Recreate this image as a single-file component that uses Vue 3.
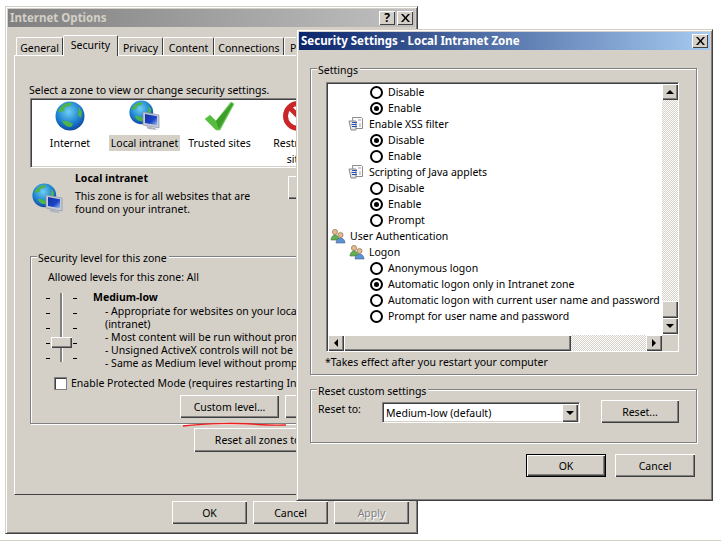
<script setup>
const tabs = [
  { t: 'General', w: 47 }, { t: 'Security', w: 55, active: true }, { t: 'Privacy', w: 45 },
  { t: 'Content', w: 51 }, { t: 'Connections', w: 70 }, { t: 'Programs', w: 60 }
]
const sliderRows = [0, 1, 2, 3, 4]
const rows = [
  { k: 'r', t: 'Disable' }, { k: 'r', t: 'Enable', on: true },
  { k: 's', t: 'Enable XSS filter' },
  { k: 'r', t: 'Disable', on: true }, { k: 'r', t: 'Enable' },
  { k: 's', t: 'Scripting of Java applets' },
  { k: 'r', t: 'Disable' }, { k: 'r', t: 'Enable', on: true }, { k: 'r', t: 'Prompt' },
  { k: 'u', t: 'User Authentication' },
  { k: 'l', t: 'Logon' },
  { k: 'r', t: 'Anonymous logon' },
  { k: 'r', t: 'Automatic logon only in Intranet zone', on: true },
  { k: 'r', t: 'Automatic logon with current user name and password' },
  { k: 'r', t: 'Prompt for user name and password' }
]
</script>

<template>
  <div class="desk">
    <!-- back dialog -->
    <section class="win back">
      <header class="title gray">
        <span>Internet Options</span>
        <span class="ctl-group">
          <span class="ctl q">?</span>
          <span class="ctl x">
            <svg viewBox="0 0 9 8" width="9" height="8"><path d="M0 0h2l2.500 3L7 0h2L5.500 4 9 8H7L4.500 5 2 8H0l3.500-4z" fill="#000"/></svg>
          </span>
        </span>
      </header>
      <nav class="tabs">
        <span v-for="tab in tabs" :key="tab.t" class="tab" :class="{ active: tab.active }" :style="{ width: tab.w + 'px' }">{{ tab.t }}</span>
      </nav>
      <div class="pane">
        <p class="select">Select a zone to view or change security settings.</p>
        <div class="zones sunken">
          <div class="zone z1">
            <svg class="ic" viewBox="0 0 32 32" width="32" height="32"><use href="#globe"/></svg>
            <span>Internet</span>
          </div>
          <div class="zone z2">
            <svg class="ic" viewBox="0 0 32 32" width="32" height="32">
              <use href="#intranet"/>
            </svg>
            <span class="sel">Local intranet</span>
          </div>
          <div class="zone z3">
            <svg class="ic" viewBox="0 0 32 32" width="32" height="32">
              <path d="M1 19l5-4 6 6L27 2l3 2-14 26h-4z" fill="#57bd3f" stroke="#7dcf63" stroke-width=".8"/>
              <path d="M12 21L28 3l1 1-14 25z" fill="#3c9c2c"/>
            </svg>
            <span>Trusted sites</span>
          </div>
          <div class="zone z4">
            <svg class="ic" viewBox="0 0 32 32" width="32" height="32">
              <circle cx="16" cy="16" r="12.500" fill="#fff" stroke="#c9262a" stroke-width="5"/>
              <path d="M7 7l18 18" stroke="#c9262a" stroke-width="5"/>
            </svg>
            <span class="rs">Restricted<br>sites</span>
          </div>
        </div>
        <div class="info">
          <svg class="info-ic" viewBox="0 0 32 32" width="32" height="32"><use href="#intranet"/></svg>
          <div class="info-txt">
            <b>Local intranet</b>
            <p>This zone is for all websites that are<br>found on your intranet.</p>
          </div>
          <span class="btn sites">Sites</span>
        </div>
        <fieldset class="grp level">
          <legend>Security level for this zone</legend>
          <p class="allowed">Allowed levels for this zone: All</p>
          <div class="level-body">
            <div class="slider">
              <i class="track"></i>
              <i class="thumb"></i>
              <div v-for="n in sliderRows" :key="n" class="tick-row"><i></i><i></i></div>
            </div>
            <div class="desc">
              <b>Medium-low</b>
              <p>- Appropriate for websites on your local network<br>(intranet)<br>- Most content will be run without prompting you<br>- Unsigned ActiveX controls will not be downloaded<br>- Same as Medium level without prompts</p>
            </div>
          </div>
          <label class="protect"><i class="chk"></i>Enable Protected Mode (requires restarting Internet Explorer)</label>
          <div class="lvl-btns">
            <span class="btn custom">Custom level...</span>
            <span class="btn default">Default level</span>
          </div>
        </fieldset>
        <svg class="scribble" viewBox="0 0 105 6" width="105" height="6"><path d="M1 4C25 1 60 1 76 2.500 84 3 96 3.300 104 3" fill="none" stroke="#f01c1c" stroke-width="1.300"/></svg>
        <div class="reset-row"><span class="btn resetall">Reset all zones to default level</span></div>
      </div>
      <footer class="foot">
        <span class="btn f">OK</span>
        <span class="btn f">Cancel</span>
        <span class="btn f off">Apply</span>
      </footer>
    </section>

    <!-- front dialog -->
    <section class="win front">
      <header class="title blue">
        <span>Security Settings - Local Intranet Zone</span>
        <span class="ctl x">
          <svg viewBox="0 0 9 8" width="9" height="8"><path d="M0 0h2l2.500 3L7 0h2L5.500 4 9 8H7L4.500 5 2 8H0l3.500-4z" fill="#000"/></svg>
        </span>
      </header>
      <div class="front-body">
        <fieldset class="grp settings">
          <legend>Settings</legend>
          <div class="list sunken">
            <div class="list-top">
              <ul class="rows">
                <li v-for="(r, i) in rows" :key="i" class="row" :class="'k-' + r.k">
                  <i v-if="r.k === 'r'" class="radio" :class="{ on: r.on }"></i>
                  <svg v-else-if="r.k === 's'" class="rowic" viewBox="0 0 16 16" width="16" height="16">
                    <path d="M4.500 1.500h9l1 1v10h-9z" fill="#fff" stroke="#8b8b8b"/>
                    <path d="M1 5h7v9H3z" fill="#e4e4e4" stroke="#8b8b8b"/>
                    <path d="M4 6.500h5M3.500 8.500h5M4 10.500h5" stroke="#2a52b8" stroke-width="1.200"/>
                    <path d="M10 4h3M11 8h2M11 10h2" stroke="#a0a0a0"/>
                  </svg>
                  <svg v-else class="rowic" viewBox="0 0 16 16" width="16" height="16"><use href="#users"/></svg>
                  <span>{{ r.t }}</span>
                </li>
              </ul>
              <div class="vbar">
                <span class="sb-btn"><i class="arr up"></i></span>
                <span class="track-fill"></span>
                <span class="sb-thumb"></span>
                <span class="sb-btn"><i class="arr dn"></i></span>
              </div>
            </div>
            <div class="hbar">
              <span class="sb-btn"><i class="arr lf"></i></span>
              <span class="h-thumb"></span>
              <span class="track-fill"></span>
              <span class="sb-btn"><i class="arr rt"></i></span>
              <span class="corner"></span>
            </div>
          </div>
          <p class="note">*Takes effect after you restart your computer</p>
        </fieldset>
        <fieldset class="grp resetbox">
          <legend>Reset custom settings</legend>
          <div class="reset-line">
            <span class="reset-lbl">Reset to:</span>
            <div class="combo sunken">
              <span>Medium-low (default)</span>
              <span class="sb-btn"><i class="arr dn"></i></span>
            </div>
            <span class="btn resetbtn">Reset...</span>
          </div>
        </fieldset>
        <div class="front-foot">
          <span class="btn ok-def"><span>OK</span></span>
          <span class="btn cancel">Cancel</span>
        </div>
      </div>
    </section>

    <svg class="defs" width="0" height="0">
      <defs>
        <radialGradient id="sea" cx=".45" cy=".35" r=".75">
          <stop offset="0" stop-color="#6fd0f2"/><stop offset=".55" stop-color="#1d82cf"/><stop offset="1" stop-color="#0a2f92"/>
        </radialGradient>
        <linearGradient id="scr" x1="0" y1="0" x2="1" y2="1">
          <stop offset="0" stop-color="#12309f"/><stop offset=".6" stop-color="#1a45c8"/><stop offset="1" stop-color="#a5c0ef"/>
        </linearGradient>
        <g id="globe">
          <circle cx="16" cy="16" r="14.500" fill="url(#sea)"/>
          <path d="M6 8c3-4 8-6 12-5l-2 3-5 1-1 4-4 1-2-1zM25 7l3 5-1 6-3-3zM8 21c3-1 7 0 11 3l-2 3c-4 0-7-2-9-6z" fill="#4fb347"/>
        </g>
        <g id="intranet">
          <g transform="scale(.82)">
            <circle cx="15" cy="15" r="14.500" fill="url(#sea)"/>
            <path d="M5 8c3-4 8-6 12-5l-2 3-5 1-1 4-4 1-2-1zM24 7l3 5-1 6-3-3zM7 20c3-1 7 0 11 3l-2 3c-4 0-7-2-9-6z" fill="#4fb347"/>
          </g>
          <path d="M14 12l16 3v13l-16-3z" fill="#c5cbd6" stroke="#8b93a3" stroke-width=".7"/>
          <path d="M16 14l12 2.300v9L16 23z" fill="url(#scr)"/>
          <path d="M17 26l9 2 2 2-9-1z" fill="#aeb3bd"/>
        </g>
        <g id="users">
          <circle cx="5" cy="4" r="2.600" fill="#e6b98a" stroke="#77664a" stroke-width=".6"/>
          <path d="M1 12c0-3 2-5 4-5s4 2 4 5z" fill="#5fb14c" stroke="#4a6d3a" stroke-width=".6"/>
          <circle cx="10.500" cy="7" r="2.600" fill="#e6b98a" stroke="#77664a" stroke-width=".6"/>
          <path d="M6 15c0-3 2-5 4.500-5s4.500 2 4.500 5z" fill="#5f93d0" stroke="#3d5f8f" stroke-width=".6"/>
        </g>
      </defs>
    </svg>
  </div>
</template>

<style>
html, body { margin: 0; background: #fff; }
</style>

<style scoped>
.desk {
  position: relative; width: 721px; height: 541px; overflow: hidden; background: #fff;
  font: 10.500px/16px "Noto Sans", Tahoma, sans-serif; color: #000;
  border-bottom: 1px solid #d4d0c8; box-sizing: border-box;
}
.defs { position: absolute; }
p { margin: 0; }
.win {
  position: absolute; box-sizing: border-box; background: #d4d0c8;
  display: flex; flex-direction: column; padding: 2px;
  border: 1px solid; border-color: #d4d0c8 #404040 #404040 #d4d0c8;
  box-shadow: inset 1px 1px 0 #fff, inset -1px -1px 0 #808080;
}
.back { left: 5px; top: 6px; width: 413px; height: 528px; }
.front { left: 296px; top: 29px; width: 417px; height: 472px; }
.title {
  height: 18px; flex: none; display: flex; align-items: center; justify-content: space-between;
  padding: 0 2px; font-weight: 700; font-size: 11.500px; color: #fff; white-space: nowrap;
}
.gray { background: linear-gradient(90deg, #808080, #c0c0c0); color: #d4d0c8; }
.blue { background: linear-gradient(90deg, #0a246a, #a6caf0); }
.ctl-group { display: flex; gap: 2px; }
.ctl {
  width: 16px; height: 14px; box-sizing: border-box; background: #d4d0c8; color: #000;
  display: flex; align-items: center; justify-content: center; font-size: 12px;
  box-shadow: inset 1px 1px 0 #fff, inset -1px -1px 0 #404040;
}
.q { font-weight: 700; }
.tabs { display: flex; height: 25px; padding: 3px 0 0 8px; box-sizing: content-box; align-items: flex-end; }
.tab {
  height: 18px; box-sizing: border-box; display: flex; align-items: center; justify-content: center; padding-top: 2px;
  border: 1px solid; border-color: #fff #404040 transparent #fff; border-bottom: 0; border-radius: 2px 2px 0 0;
  white-space: nowrap; flex: none;
}
.tab.active { height: 21px; margin-bottom: -1px; padding: 0 0 2px; position: relative; z-index: 2; background: #d4d0c8; }
.pane {
  flex: 1; margin: 0 6px; position: relative; padding: 26px 14px 0 14px;
  border: 1px solid; border-color: #fff #404040 #404040 #fff; display: flex; flex-direction: column;
}
.select { white-space: nowrap; height: 16px; }
.sunken {
  box-sizing: border-box; background: #fff;
  border: 1px solid; border-color: #808080 #fff #fff #808080;
  box-shadow: inset 1px 1px 0 #404040, inset -1px -1px 0 #d4d0c8;
}
.zones { height: 70px; width: 362px; margin-left: 1px; display: flex; position: relative; flex: none; }
.zone { display: flex; flex-direction: column; align-items: center; flex: none; white-space: nowrap; width: 75px; padding-top: 1px; }
.zone .ic { margin-bottom: 3px; }
.z1 { margin-left: 1px; width: 76px; }
.z2 { margin-left: -1px; } .z3 { width: 75px; } .z4 { width: 76px; margin-left: 3px; }
.sel { background: #d4d0c8; padding: 0 2px; }
.rs { text-align: center; }
.info { display: flex; height: 54px; position: relative; flex: none; margin-top: 2px; }
.info-ic { margin: 13px 0 0 3px; flex: none; }
.info-txt { margin-left: 11px; white-space: nowrap; flex: none; }
.info-txt b { display: block; height: 16px; margin-bottom: 4px; color: #000; }
.info-txt p { line-height: 13px; }
.sites { position: absolute; left: 259px; top: 6px; width: 75px; height: 23px; }
.grp {
  margin: 0; padding: 0; box-sizing: border-box; min-width: 0; position: relative;
  border: 1px solid #808080; box-shadow: 1px 1px 0 #fff, inset 1px 1px 0 #fff;
}
.grp legend { padding: 3px 2px 0 1px; line-height: 14px; white-space: nowrap; background: #d4d0c8; }
.level { height: 176px; width: 362px; flex: none; margin: 24px 0 0 1px; padding: 0 0 0 17px; }
.level legend { margin-left: -11px; }
.allowed { white-space: nowrap; margin-top: 4px; height: 16px; }
.level-body { display: flex; height: 83px; margin-top: 4px; }
.slider { width: 32px; position: relative; margin-left: -3px; flex: none; padding-top: 2px; }
.track { position: absolute; left: 15px; top: 4px; width: 2px; height: 69px; background: #808080; border-right: 1px solid #fff; }
.thumb { position: absolute; left: 6px; top: 48px; width: 21px; height: 11px; background: #d4d0c8; box-shadow: inset 1px 1px 0 #fff, inset -1px -1px 0 #404040, inset -2px -2px 0 #808080; z-index: 1; }
.tick-row { display: flex; justify-content: space-between; height: 15px; width: 32px; align-items: center; }
.tick-row i { display: block; width: 4px; height: 1px; background: #000; margin-left: 1px; }
.desc { margin-left: 16px; white-space: nowrap; flex: none; }
.desc b { display: block; height: 15px; }
.desc p { margin-left: 12px; line-height: 13px; margin-top: 1px; }
.protect { display: flex; align-items: center; margin: 3px 0 0 6px; height: 16px; white-space: nowrap; }
.chk { width: 13px; height: 13px; box-sizing: border-box; margin-right: 4px; background: #fff; border: 1px solid #808080; box-shadow: inset 1px 1px 0 #404040; flex: none; }
.lvl-btns { display: flex; gap: 6px; margin: 4px 0 0 132px; }
.btn {
  box-sizing: border-box; display: flex; align-items: center; justify-content: center; flex: none;
  background: #d4d0c8; white-space: nowrap;
  box-shadow: inset 1px 1px 0 #fff, inset -1px -1px 0 #404040, inset -2px -2px 0 #808080;
}
.custom { width: 99px; height: 23px; }
.default { width: 100px; height: 23px; }
.scribble { position: absolute; left: 167px; top: 366px; z-index: 3; }
.reset-row { margin: 4px 0 0 165px; }
.resetall { width: 190px; height: 24px; }
.foot { display: flex; gap: 6px; justify-content: flex-end; padding: 6px 6px 0 0; height: 36px; flex: none; box-sizing: border-box; }
.f { width: 75px; height: 23px; }
.off { color: #808080; text-shadow: 1px 1px 0 #fff; }
.front-body { flex: 1; display: flex; flex-direction: column; padding: 10px 13px 0 11px; }
.settings { height: 315px; flex: none; padding: 0 0 0 15px; }
.settings legend { margin-left: -9px; }
.list { width: 353px; height: 270px; margin-top: 5px; display: flex; flex-direction: column; padding: 1px 0 0 1px; }
.list-top { flex: 1; display: flex; min-height: 0; }
.rows { flex: 1; list-style: none; margin: 0; padding: 0; overflow: hidden; }
.row { height: 16px; display: flex; align-items: center; white-space: nowrap; }
.k-r { padding-left: 42px; } .k-s { padding-left: 20px; } .k-l { padding-left: 21px; } .k-u { padding-left: 2px; }
.radio { width: 13px; height: 13px; box-sizing: border-box; border: 2px solid #000; border-radius: 50%; margin-right: 5px; background: #fff; position: relative; flex: none; }
.radio.on::after { content: ""; position: absolute; left: 2px; top: 2px; width: 5px; height: 5px; background: #000; border-radius: 50%; }
.k-s .rowic { margin-right: 5px; }
.k-u .rowic, .k-l .rowic { margin-right: 4px; }
.rowic { flex: none; }
.vbar { width: 16px; flex: none; display: flex; flex-direction: column; padding-bottom: 1px; }
.sb-btn {
  width: 16px; height: 16px; flex: none; box-sizing: border-box; background: #d4d0c8; display: flex; align-items: center; justify-content: center;
  box-shadow: inset 1px 1px 0 #fff, inset -1px -1px 0 #404040, inset -2px -2px 0 #808080;
}
.track-fill { flex: 1; background: repeating-conic-gradient(#d4d0c8 0 25%, #fff 0 50%) 0 0 / 2px 2px; }
.sb-thumb { height: 17px; flex: none; background: #d4d0c8; box-shadow: inset 1px 1px 0 #fff, inset -1px -1px 0 #404040, inset -2px -2px 0 #808080; }
.arr { width: 0; height: 0; border: 4px solid transparent; }
.up { border-bottom-color: #000; border-top: 0; }
.dn { border-top-color: #000; border-bottom: 0; }
.lf { border-right-color: #000; border-left: 0; }
.rt { border-left-color: #000; border-right: 0; }
.hbar { height: 16px; flex: none; display: flex; }
.h-thumb { width: 227px; flex: none; background: #d4d0c8; box-shadow: inset 1px 1px 0 #fff, inset -1px -1px 0 #404040, inset -2px -2px 0 #808080; }
.corner { width: 16px; flex: none; background: #d4d0c8; }
.note { margin: 2px 0 0 -1px; white-space: nowrap; }
.resetbox { height: 62px; flex: none; margin-top: 6px; padding: 0 0 0 7px; }
.resetbox legend { margin-left: -1px; }
.reset-line { display: flex; align-items: flex-start; margin-top: 3px; }
.reset-lbl { width: 64px; flex: none; }
.combo { width: 198px; height: 21px; margin-top: 1px; display: flex; align-items: center; justify-content: space-between; padding: 1px 1px 0 3px; flex: none; }
.combo .sb-btn { height: 18px; }
.resetbtn { width: 78px; height: 23px; margin: -1px 0 0 21px; }
.front-foot { display: flex; gap: 9px; justify-content: flex-end; margin: 11px 2px 0 0; }
.ok-def { width: 80px; height: 23px; border: 1px solid #000; }
.cancel { width: 80px; height: 23px; }
</style>
